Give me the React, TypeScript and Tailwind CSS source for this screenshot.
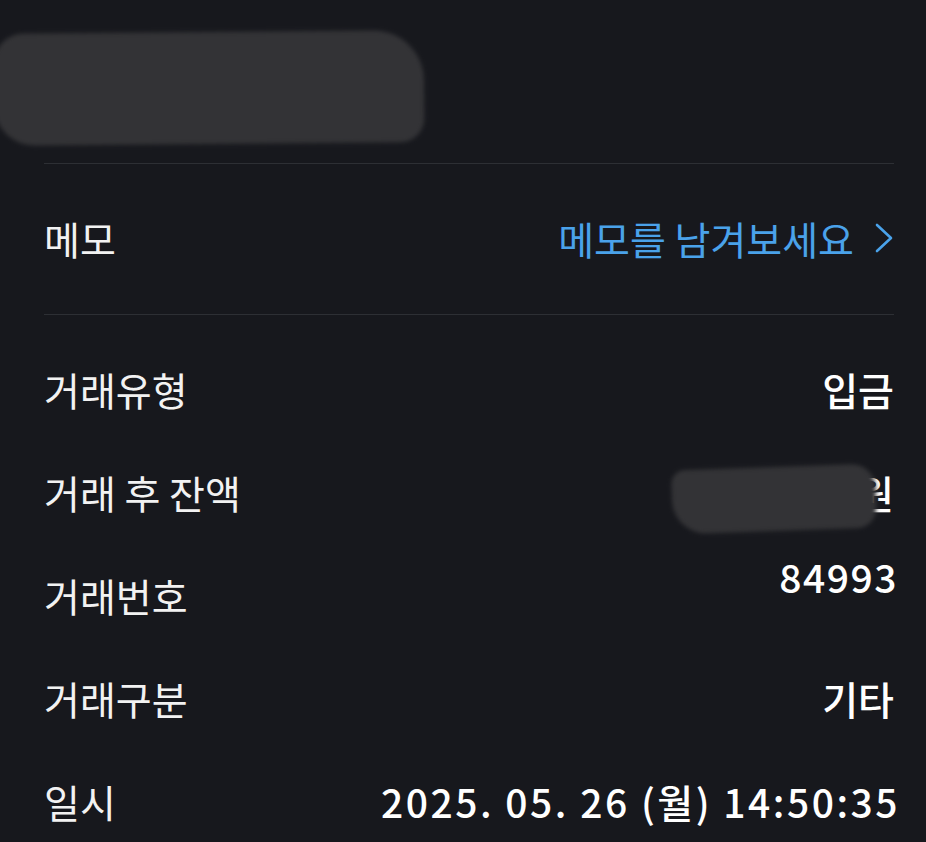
// 거래 상세 화면 (다크 테마)
const font = "font-['Noto_Sans_CJK_KR','Noto_Sans',sans-serif]";

type Row = { label: string; value: React.ReactNode; valueClass?: string };

const rows: Row[] = [
  { label: '거래유형', value: '입금' },
  {
    label: '거래 후 잔액',
    value: (
      <span className="relative inline-block">
        <span className="inline-block w-[196px]" />
        원
        {/* 가려진 금액 */}
        <span className="absolute left-[10px] top-[-6px] h-[64px] w-[204px] -rotate-2 rounded-[14px_24px_20px_34px] bg-[#333336] blur-[2px]" />
      </span>
    ),
  },
  { label: '거래번호', value: '84993', valueClass: 'mb-[38px] mr-[-4px] tracking-[1.5px]' },
  { label: '거래구분', value: '기타' },
  { label: '일시', value: '2025. 05. 26 (월) 14:50:35', valueClass: 'mr-[-6px] tracking-[2.5px]' },
];

function ChevronRight() {
  return (
    <svg width="20" height="32" viewBox="0 0 20 32" fill="none" className="shrink-0">
      <path d="M3 3 L17 16 L3 29" stroke="#4aa2ea" strokeWidth="2.6" strokeLinecap="round" strokeLinejoin="round" />
    </svg>
  );
}

export default function App() {
  return (
    <div className={`min-h-[842px] w-full overflow-hidden bg-[#17181d] text-[#f2f2f2] ${font}`}>
      {/* 가려진 상단 제목 */}
      <div className="relative h-[163px]">
        <div className="absolute left-[-6px] top-[32px] h-[112px] w-[430px] rotate-[-0.5deg] rounded-[30px_50px_24px_40px] bg-[#333336] blur-[2px]" />
      </div>

      <div className="ml-[44px] mr-[32px]">
        <div className="border-t border-[#2d2f34]" />

        {/* 메모 */}
        <div className="flex h-[150px] items-center justify-between pb-[2px]">
          <span className="text-[39px] leading-none">메모</span>
          <button className="flex items-center gap-[20px] text-[39px] font-normal leading-none text-[#4aa2ea]">
            메모를 남겨보세요
            <ChevronRight />
          </button>
        </div>

        <div className="border-t border-[#2d2f34]" />

        <div className="pt-[23px]">
          {rows.map((r) => (
            <div key={r.label} className="flex h-[103px] items-center justify-between">
              <span className="text-[39px] leading-none">{r.label}</span>
              <span className={`text-[39px] font-medium leading-none text-white ${r.valueClass ?? ''}`}>
                {r.value}
              </span>
            </div>
          ))}
        </div>
      </div>
    </div>
  );
}
